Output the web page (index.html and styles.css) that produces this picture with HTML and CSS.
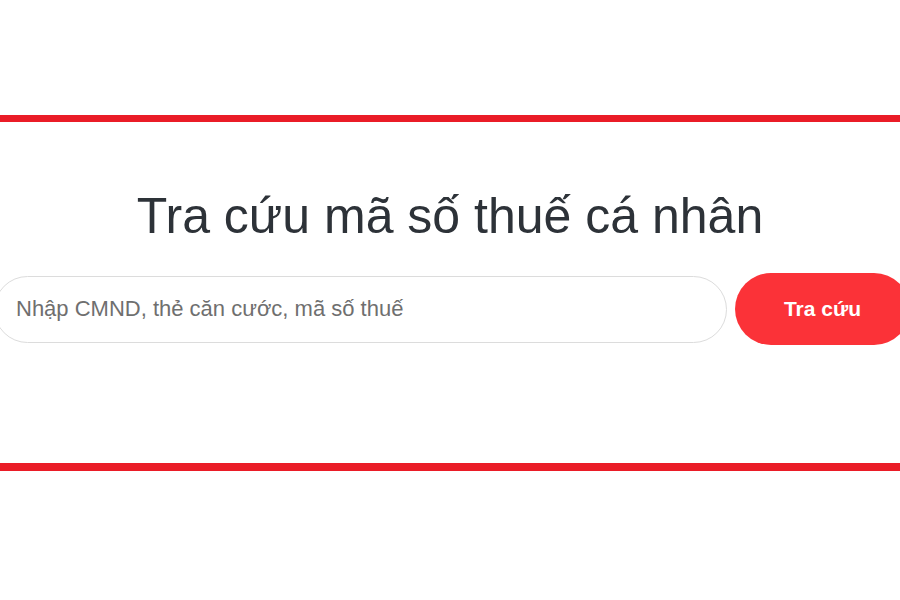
FILE: index.html
```html
<!DOCTYPE html>
<html lang="vi">
<head>
<meta charset="utf-8">
<title>Tra cứu mã số thuế cá nhân</title>
<link rel="stylesheet" href="styles.css">
</head>
<body>
<section class="lookup">
  <h1 class="lookup-title">Tra cứu mã số thuế cá nhân</h1>
  <form class="lookup-form" onsubmit="return false">
    <input class="lookup-input" type="text" placeholder="Nhập CMND, thẻ căn cước, mã số thuế">
    <button class="lookup-button" type="submit">Tra cứu</button>
  </form>
</section>
</body>
</html>
```

FILE: styles.css
```css
html, body {
  margin: 0;
  padding: 0;
  background: #ffffff;
  overflow: hidden;
  font-family: "Liberation Sans", Arial, sans-serif;
}

body {
  width: 900px;
  height: 600px;
  padding-top: 115px;
  box-sizing: border-box;
}

.lookup {
  border-top: 7px solid #ea1c27;
  border-bottom: 8px solid #ea1c27;
  height: 341px;
  box-sizing: content-box;
  display: flex;
  flex-direction: column;
  align-items: stretch;
}

.lookup-title {
  margin: 65px 0 0 0;
  font-size: 50px;
  line-height: 58px;
  font-weight: normal;
  color: #2d3238;
  text-align: center;
}

.lookup-form {
  margin: 28px 0 0 -6px;
  display: flex;
  align-items: center;
  gap: 8px;
}

.lookup-input {
  flex: 0 0 auto;
  width: 733px;
  height: 67px;
  box-sizing: border-box;
  border: 1px solid #dcdcdc;
  border-radius: 34px;
  padding: 0 0 0 21px;
  font-family: "Liberation Sans", Arial, sans-serif;
  font-size: 22px;
  color: #333;
  background: #fff;
  outline: none;
}

.lookup-input::placeholder {
  color: #6f6f6f;
}

.lookup-button {
  flex: 0 0 auto;
  width: 175px;
  height: 72px;
  border: none;
  border-radius: 36px;
  background: #fb3238;
  color: #ffffff;
  font-family: "Liberation Sans", Arial, sans-serif;
  font-weight: bold;
  font-size: 21px;
  padding: 0;
  cursor: pointer;
}
```
